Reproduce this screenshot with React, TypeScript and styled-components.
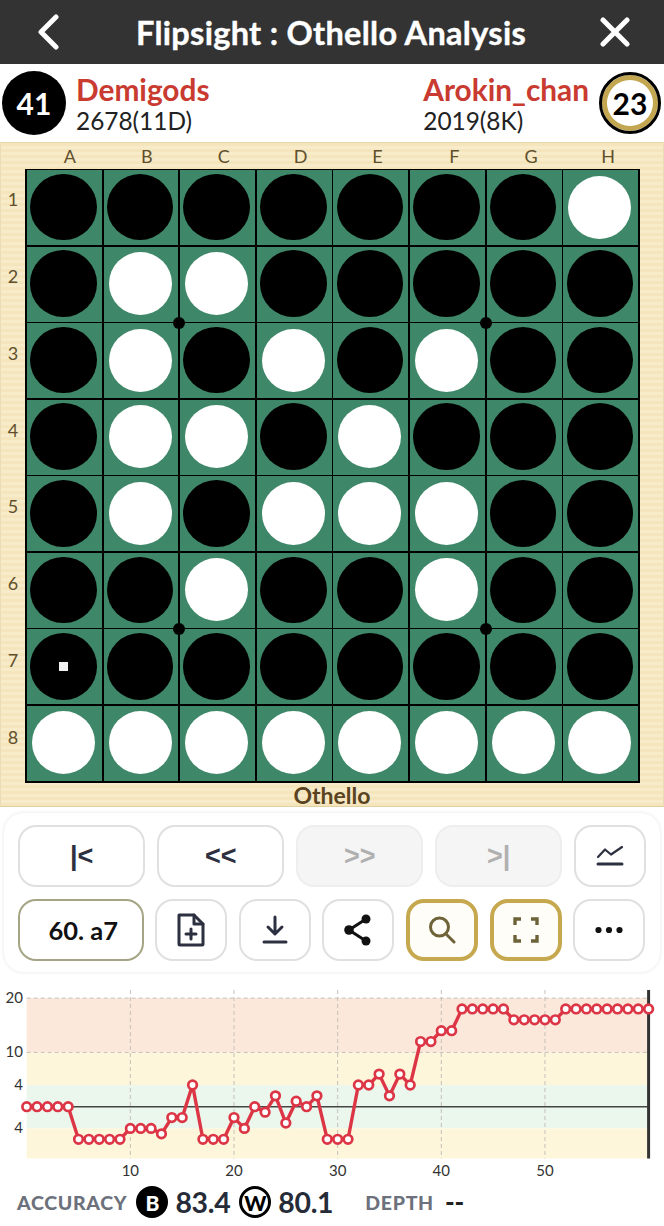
import React from "react";
import styled, { createGlobalStyle } from "styled-components";

const Global = createGlobalStyle`
  html, body { margin: 0; padding: 0; background: #fff; overflow: hidden; }
  * { box-sizing: border-box; }
  body { font-family: Lato, "Liberation Sans", sans-serif; }
`;

const Page = styled.div`
  width: 664px;
  height: 1226px;
  display: flex;
  flex-direction: column;
  background: #fff;
  overflow: hidden;
`;

const Header = styled.header`
  height: 64px;
  background: #333333;
  display: flex;
  align-items: center;
  justify-content: space-between;
  padding: 0 34px 0 36px;
  color: #fff;
`;
const Title = styled.h1`
  margin: 0 0 0 2px;
  font-size: 32.5px;
  font-weight: 700;
  color: #fff;
  letter-spacing: 0.3px;
  -webkit-text-stroke: 0.4px #fff;
`;

const PlayerBar = styled.section`
  height: 78px;
  display: flex;
  align-items: center;
  justify-content: space-between;
  padding: 0 3px 0 2px;
`;
const Player = styled.div`
  display: flex;
  align-items: center;
  gap: 10px;
`;
const Count = styled.div<{ $white?: boolean }>`
  width: ${(p) => (p.$white ? "62px" : "64px")};
  height: ${(p) => (p.$white ? "62px" : "64px")};
  border-radius: 50%;
  display: flex;
  align-items: center;
  justify-content: center;
  font-weight: 700;
  font-size: 30px;
  background: ${(p) => (p.$white ? "#fff" : "#000")};
  color: ${(p) => (p.$white ? "#000" : "#fff")};
  border: ${(p) => (p.$white ? "3px solid #000" : "none")};
  box-shadow: ${(p) => (p.$white ? "inset 0 0 0 5px #c2a650" : "none")};
`;
const Names = styled.div`
  display: flex;
  flex-direction: column;
  padding-top: 1px;
`;
const Name = styled.div`
  font-size: 29.8px;
  line-height: 34px;
  font-weight: 700;
  color: #c93a30;
`;
const Rating = styled.div`
  font-size: 24.4px;
  line-height: 28px;
  color: #222;
`;

const Frame = styled.section`
  height: 665px;
  display: grid;
  grid-template-columns: 24px 615px 1fr;
  grid-template-rows: 25px 614px 1fr;
  background: repeating-linear-gradient(180deg, #f4e5bc 0 3px, #f7ebca 3px 6px);
  border-top: 1px solid #e6d7ab;
  border-bottom: 1px solid #e0d0a2;
  border-left: 1px solid #eadcb4;
  border-right: 1px solid #eadcb4;
`;
const ColLabels = styled.div`
  grid-column: 2;
  display: grid;
  grid-template-columns: repeat(8, 1fr);
`;
const ColLabel = styled.span`
  display: flex;
  align-items: center;
  justify-content: center;
  padding-left: 13px;
  font-size: 18px;
  color: #5f4f2c;
`;
const RowLabels = styled.div`
  grid-column: 1;
  grid-row: 2;
  display: grid;
  grid-template-rows: repeat(8, 1fr);
`;
const RowLabel = styled.span`
  display: flex;
  align-items: center;
  justify-content: center;
  padding-bottom: 14px;
  font-size: 18px;
  color: #5f4f2c;
`;
const Board = styled.div`
  grid-column: 2;
  grid-row: 2;
  position: relative;
  display: grid;
  grid-template-columns: repeat(8, 1fr);
  grid-template-rows: repeat(8, 1fr);
  gap: 1.8px;
  padding: 1.8px;
  margin: 0.5px 0 -0.5px 0.2px;
  background: #000;
`;
const Cell = styled.div`
  background: #3e8768;
  display: flex;
  align-items: center;
  justify-content: center;
  padding: 0 2px 1px 0;
`;
const Disc = styled.div<{ $c: string }>`
  width: ${(p) => (p.$c === "w" ? "63px" : "66.5px")};
  height: ${(p) => (p.$c === "w" ? "63px" : "66.5px")};
  border-radius: 50%;
  background: ${(p) => (p.$c === "w" ? "#fff" : "#000")};
  display: flex;
  align-items: center;
  justify-content: center;
`;
const Marker = styled.div`
  width: 9px;
  height: 9px;
  background: #f0f0f0;
`;
const Star = styled.div<{ $x: number; $y: number }>`
  position: absolute;
  width: 12px;
  height: 12px;
  border-radius: 50%;
  background: #000;
  left: ${(p) => p.$x * 76.65 + 0.9 - 6}px;
  top: ${(p) => p.$y * 76.55 + 0.9 - 6}px;
`;
const Caption = styled.div`
  grid-column: 1 / -1;
  grid-row: 3;
  text-align: center;
  font-size: 23px;
  line-height: 25px;
  padding-top: 1px;
  font-weight: 700;
  color: #5a4320;
`;

const Panel = styled.section`
  margin: 6px 4px 0;
  height: 159px;
  border-radius: 20px;
  background: #fff;
  box-shadow: 0 0 4px rgba(0, 0, 0, 0.1);
  padding: 12px 14px;
  display: flex;
  flex-direction: column;
  gap: 11.5px;
`;
const Row = styled.div`
  display: flex;
  gap: 11.6px;
  height: 62px;
`;
const Btn = styled.button<{ $w?: number; $off?: boolean; $gold?: boolean }>`
  flex: ${(p) => (p.$w ? `0 0 ${p.$w}px` : "1 1 0")};
  min-width: 0;
  height: 62px;
  padding: 0;
  display: flex;
  align-items: center;
  justify-content: center;
  border-radius: 18px;
  font-family: "Liberation Sans", sans-serif;
  font-weight: 700;
  font-size: 27px;
  background: ${(p) => (p.$off ? "#f5f5f5" : p.$gold ? "#fffdf7" : "#fff")};
  color: ${(p) => (p.$off ? "#b0b0b0" : "#2d3040")};
  border: ${(p) =>
    p.$gold ? "4.5px solid #c6a84f" : p.$off ? "2px solid #eeeeee" : "2px solid #e0e0e0"};
`;
const MoveBtn = styled(Btn)`
  border: 2px solid #a5a585;
  color: #111;
  font-family: Lato, sans-serif;
  font-size: 25.5px;
  font-weight: 700;
  padding-left: 5px;
`;

const ChartWrap = styled.div`
  margin-top: 13px;
  height: 205px;
`;

const Footer = styled.footer`
  display: flex;
  align-items: center;
  padding: 0 0 0 17px;
  height: 36px;
  margin-top: -6px;
`;
const StatLabel = styled.span<{ $ml?: number }>`
  font-size: 19.5px;
  font-weight: 900;
  letter-spacing: 0.7px;
  color: #6c717c;
  margin-left: ${(p) => p.$ml ?? 0}px;
`;
const Badge = styled.span<{ $white?: boolean }>`
  width: 32px;
  height: 32px;
  border-radius: 50%;
  display: inline-flex;
  align-items: center;
  justify-content: center;
  font-size: 21px;
  font-weight: 900;
  margin: 0 7px 0 ${(p) => (p.$white ? 9 : 9)}px;
  background: ${(p) => (p.$white ? "#fff" : "#000")};
  color: ${(p) => (p.$white ? "#000" : "#fff")};
  border: ${(p) => (p.$white ? "3px solid #000" : "none")};
`;
const StatValue = styled.span`
  font-size: 28.4px;
  font-weight: 700;
  color: #262b38;
  letter-spacing: -0.3px;
`;
const DepthValue = styled.span`
  font-size: 26px;
  font-weight: 900;
  color: #222;
  margin-left: 11px;
`;

const board = [
  "bbbbbbbw",
  "bwwbbbbb",
  "bwbwbwbb",
  "bwwbwbbb",
  "bwbwwwbb",
  "bbwbbwbb",
  "bbbbbbbb",
  "wwwwwwww",
];

const values = [
  0, 0, 0, 0, 0, -6, -6, -6, -6, -6, -4, -4, -4, -5, -2, -2, 4, -6, -6, -6, -2, -4, 0, -1, 2, -3, 1, 0, 2, -6, -6,
  -6, 4, 4, 6, 2, 6, 4, 12, 12, 14, 14, 18, 18, 18, 18, 18, 16, 16, 16, 16, 16, 18, 18, 18, 18, 18, 18, 18, 18, 18,
];

const TOP = 985;
const X = (n: number) => 26.7 + n * 10.365;
const Y = (v: number) => 1106.7 - TOP - v * 5.43;

const Back = () => (
  <svg width="24" height="36" viewBox="0 0 24 36" fill="none" stroke="#fff" strokeWidth="5" strokeLinecap="round" strokeLinejoin="round">
    <path d="M20 3 L5 18 L20 33" />
  </svg>
);
const Close = () => (
  <svg width="30" height="30" viewBox="0 0 30 30" fill="none" stroke="#fff" strokeWidth="5" strokeLinecap="round">
    <path d="M3 3 L27 27 M27 3 L3 27" />
  </svg>
);
const ChartIcon = () => (
  <svg width="28" height="24" viewBox="0 0 28 24" fill="none" stroke="#2d3040" strokeLinecap="round" strokeLinejoin="round">
    <path d="M2 13 L9 5.5 L15 10.5 L26 3" strokeWidth="2.2" />
    <path d="M2 20 H26" strokeWidth="3" />
  </svg>
);
const FilePlus = () => (
  <svg width="30" height="36" viewBox="0 0 30 36" fill="none" stroke="#2d3040" strokeWidth="3" strokeLinejoin="round" strokeLinecap="round">
    <path d="M3 3 H18 L27 12 V32 Q27 33 26 33 H4 Q3 33 3 32 Z" />
    <path d="M18 3 V12 H27" />
    <path d="M15 17 V27 M10 22 H20" />
  </svg>
);
const Download = () => (
  <svg width="28" height="32" viewBox="0 0 28 32" fill="none" stroke="#2d3040" strokeLinecap="round" strokeLinejoin="round">
    <path d="M14 3 V19 M7 13 L14 20 L21 13" strokeWidth="3" />
    <path d="M3 28 H25" strokeWidth="3" />
  </svg>
);
const Share = () => (
  <svg width="32" height="36" viewBox="0 0 32 36" fill="#111" stroke="#111">
    <path d="M24 7 L7 18 L24 29" fill="none" strokeWidth="3" />
    <circle cx="24" cy="7" r="4.5" strokeWidth="0" />
    <circle cx="7" cy="18" r="4.8" strokeWidth="0" />
    <circle cx="24" cy="29" r="4.5" strokeWidth="0" />
  </svg>
);
const Search = () => (
  <svg width="28" height="30" viewBox="0 0 28 30" fill="none" stroke="#6d6238" strokeWidth="3" strokeLinecap="round">
    <circle cx="11.5" cy="12" r="9" />
    <path d="M18 19 L26 27" />
  </svg>
);
const Expand = () => (
  <svg width="26" height="26" viewBox="0 0 26 26" fill="none" stroke="#6d6238" strokeWidth="3.4">
    <path d="M2 8 V2 H8 M18 2 H24 V8 M24 18 V24 H18 M8 24 H2 V18" />
  </svg>
);
const Dots = () => (
  <svg width="30" height="8" viewBox="0 0 30 8" fill="#111">
    <circle cx="4.5" cy="4" r="3.1" />
    <circle cx="15" cy="4" r="3.1" />
    <circle cx="25.5" cy="4" r="3.1" />
  </svg>
);

const Chart = () => {
  const x0 = X(0);
  const x1 = 649;
  const b = 1158.5 - TOP;
  const pts = values.map((v, i) => `${X(i)},${Y(v)}`).join(" ");
  const ticks = [10, 20, 30, 40, 50];
  const labelStyle = { fontFamily: "Lato, sans-serif", fontSize: 15, fill: "#333" };
  return (
    <svg width="664" height="205" viewBox="0 0 664 205" style={{ display: "block" }}>
      <rect x={x0} y={Y(20)} width={x1 - x0} height={Y(10) - Y(20)} fill="#fce8db" />
      <rect x={x0} y={Y(10)} width={x1 - x0} height={Y(4) - Y(10)} fill="#fef6da" />
      <rect x={x0} y={Y(4)} width={x1 - x0} height={Y(-4) - Y(4)} fill="#ebf6ec" />
      <rect x={x0} y={Y(-4)} width={x1 - x0} height={b - Y(-4)} fill="#fef6da" />
      {[20, 10].map((v) => (
        <line key={v} x1={x0} x2={x1} y1={Y(v)} y2={Y(v)} stroke="#c4c0bb" strokeWidth="1" strokeDasharray="4 3" />
      ))}
      {ticks.map((t) => (
        <line key={t} x1={X(t)} x2={X(t)} y1={5} y2={b} stroke="#c4c0bb" strokeWidth="1" strokeDasharray="4 3" />
      ))}
      <line x1={x0} x2={x1} y1={Y(0)} y2={Y(0)} stroke="#444" strokeWidth="1.5" />
      <line x1={X(60)} x2={X(60)} y1={5} y2={b} stroke="#333" strokeWidth="3" />
      <polyline points={pts} fill="none" stroke="#dc3545" strokeWidth="3.4" strokeLinejoin="round" />
      {values.map((v, i) => (
        <circle key={i} cx={X(i)} cy={Y(v)} r="4.3" fill="#fff" stroke="#dc3545" strokeWidth="2.7" />
      ))}
      <g style={labelStyle} textAnchor="end">
        <text x="23" y={Y(20) + 5}>20</text>
        <text x="23" y={Y(10) + 5}>10</text>
        <text x="23" y={Y(4) + 5}>4</text>
        <text x="23" y={Y(-4) + 5}>4</text>
      </g>
      <g style={labelStyle} textAnchor="middle">
        {ticks.map((t) => (
          <text key={t} x={X(t)} y={191}>{t}</text>
        ))}
      </g>
    </svg>
  );
};

export default function App() {
  return (
    <Page>
      <Global />
      <Header>
        <Back />
        <Title>Flipsight : Othello Analysis</Title>
        <Close />
      </Header>
      <PlayerBar>
        <Player>
          <Count>41</Count>
          <Names>
            <Name>Demigods</Name>
            <Rating>2678(11D)</Rating>
          </Names>
        </Player>
        <Player>
          <Names>
            <Name>Arokin_chan</Name>
            <Rating>2019(8K)</Rating>
          </Names>
          <Count $white>23</Count>
        </Player>
      </PlayerBar>
      <Frame>
        <ColLabels>
          {"ABCDEFGH".split("").map((l) => (
            <ColLabel key={l}>{l}</ColLabel>
          ))}
        </ColLabels>
        <RowLabels>
          {"12345678".split("").map((l) => (
            <RowLabel key={l}>{l}</RowLabel>
          ))}
        </RowLabels>
        <Board>
          {board.flatMap((row, r) =>
            row.split("").map((c, i) => (
              <Cell key={`${r}-${i}`}>
                <Disc $c={c}>{r === 6 && i === 0 ? <Marker /> : null}</Disc>
              </Cell>
            ))
          )}
          <Star $x={2} $y={2} />
          <Star $x={6} $y={2} />
          <Star $x={2} $y={6} />
          <Star $x={6} $y={6} />
        </Board>
        <Caption>Othello</Caption>
      </Frame>
      <Panel>
        <Row>
          <Btn>|&lt;</Btn>
          <Btn>&lt;&lt;</Btn>
          <Btn $off>&gt;&gt;</Btn>
          <Btn $off>&gt;|</Btn>
          <Btn $w={72}><ChartIcon /></Btn>
        </Row>
        <Row>
          <MoveBtn $w={125.6}>60. a7</MoveBtn>
          <Btn $w={72}><FilePlus /></Btn>
          <Btn $w={72}><Download /></Btn>
          <Btn $w={72}><Share /></Btn>
          <Btn $w={72} $gold><Search /></Btn>
          <Btn $w={72} $gold><Expand /></Btn>
          <Btn $w={72}><Dots /></Btn>
        </Row>
      </Panel>
      <ChartWrap>
        <Chart />
      </ChartWrap>
      <Footer>
        <StatLabel>ACCURACY</StatLabel>
        <Badge>B</Badge>
        <StatValue>83.4</StatValue>
        <Badge $white>W</Badge>
        <StatValue>80.1</StatValue>
        <StatLabel $ml={32}>DEPTH</StatLabel>
        <DepthValue>--</DepthValue>
      </Footer>
    </Page>
  );
}
